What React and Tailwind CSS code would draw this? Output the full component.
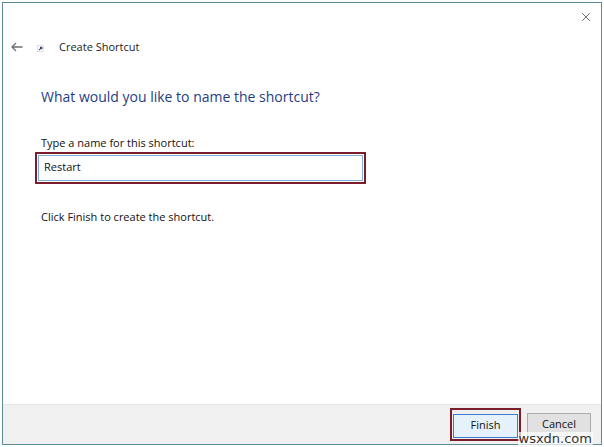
import { X } from "lucide-react";

function BackArrow() {
  return (
    <svg width="12" height="10" viewBox="0 0 12 10" fill="none">
      <path d="M11.5 5H1.2M5 1L1 5l4 4" stroke="#6f6f6f" strokeWidth="1.3" />
    </svg>
  );
}

function ShortcutIcon() {
  return (
    <svg width="7" height="7" viewBox="0 0 7 7">
      <rect x="0.5" y="0.5" width="6" height="6" fill="#fff" stroke="#d0d0d0" strokeWidth="0.6" />
      <path d="M2 5.2L4.6 2.6M3 2.4h1.8v1.8" stroke="#2b3f8c" strokeWidth="1.1" fill="none" />
    </svg>
  );
}

export default function App() {
  return (
    <div
      className="w-[604px] h-[447px] bg-white p-[2px] text-[#111]"
      style={{ fontFamily: '"Open Sans", "Noto Sans", sans-serif' }}
    >
      <div className="relative h-full flex flex-col border border-[#5b8a98]">
        {/* title bar */}
        <div className="h-[30px] flex justify-end items-start pt-[7px] pr-[8px]">
          <X size={14} strokeWidth={1.3} className="text-[#444]" />
        </div>

        {/* header */}
        <div className="h-[28px] flex items-center pl-[8px]">
          <BackArrow />
          <div className="ml-[14px] mt-[3px]">
            <ShortcutIcon />
          </div>
          <span className="ml-[15px] text-[11px] text-[#222]">Create Shortcut</span>
        </div>

        {/* body */}
        <div className="flex-1 pl-[38px]">
          <h1 className="mt-[26px] h-[20px] leading-[20px] text-[14px] text-[#1f3d85]">
            What would you like to name the shortcut?
          </h1>

          <p className="mt-[28px] h-[16px] leading-[16px] text-[11px]">
            Type a name for this shortcut:
          </p>

          <div className="-ml-[6px] mt-[1px] w-[331px] h-[32px] border-2 border-[#7b1d2b] p-[1px]">
            <div className="h-full border border-[#7fb0dd] bg-white flex items-center pl-[5px] pb-[2px] text-[11px]">
              Restart
            </div>
          </div>

          <p className="mt-[25px] h-[16px] leading-[16px] text-[11px]">
            Click Finish to create the shortcut.
          </p>
        </div>

        {/* footer */}
        <div className="h-[40px] bg-[#f0f0f0] border-t border-[#e6e6e6] flex items-center justify-end pr-[10px] gap-[6px]">
          <div className="border-2 border-[#7b1d2b] p-[1px]">
            <button className="w-[65px] h-[24px] bg-[#e5f1fb] border border-[#3c7fd0] text-[11px]">
              Finish
            </button>
          </div>
          <button className="w-[64px] h-[24px] bg-[#e1e1e1] border border-[#adadad] text-[11px]">
            Cancel
          </button>
        </div>

        <span
          className="absolute right-[8px] bottom-[-2px] px-[1px] leading-[14px] text-[13px] text-[#333] bg-white/70"
          style={{ fontFamily: '"DejaVu Sans", sans-serif' }}
        >
          wsxdn.com
        </span>
      </div>
    </div>
  );
}
